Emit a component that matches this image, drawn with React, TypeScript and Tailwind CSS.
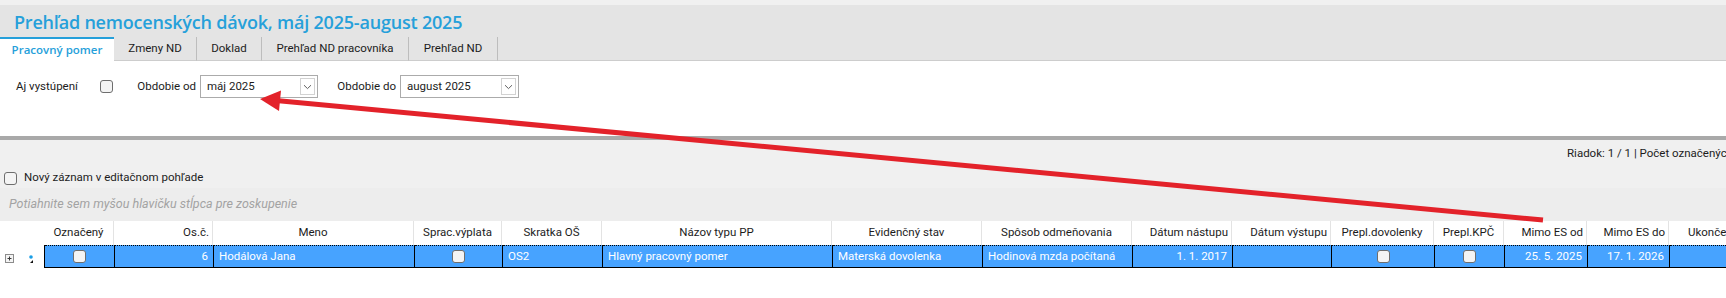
import React from "react";

type Col = {
  w: string;
  title: string;
  head: string;
  cell: string;
  value?: string;
  check?: boolean;
};

const cols: Col[] = [
  { w: "w-[70px]", title: "Označený", head: "justify-center", cell: "justify-center", check: true },
  { w: "w-[99px]", title: "Os.č.", head: "justify-end", cell: "justify-end", value: "6" },
  { w: "w-[201px]", title: "Meno", head: "justify-center", cell: "justify-start", value: "Hodálová Jana" },
  { w: "w-[88px]", title: "Sprac.výplata", head: "justify-center", cell: "justify-center", check: true },
  { w: "w-[100px]", title: "Skratka OŠ", head: "justify-center", cell: "justify-start", value: "OS2" },
  { w: "w-[230px]", title: "Názov typu PP", head: "justify-center", cell: "justify-start", value: "Hlavný pracovný pomer" },
  { w: "w-[150px]", title: "Evidenčný stav", head: "justify-center", cell: "justify-start", value: "Materská dovolenka" },
  { w: "w-[150px]", title: "Spôsob odmeňovania", head: "justify-center", cell: "justify-start", value: "Hodinová mzda počítaná" },
  { w: "w-[100px]", title: "Dátum nástupu", head: "justify-end", cell: "justify-end", value: "1. 1. 2017" },
  { w: "w-[99px]", title: "Dátum výstupu", head: "justify-end", cell: "justify-end", value: "" },
  { w: "w-[103px]", title: "Prepl.dovolenky", head: "justify-center", cell: "justify-center", check: true },
  { w: "w-[70px]", title: "Prepl.KPČ", head: "justify-center", cell: "justify-center", check: true },
  { w: "w-[83px]", title: "Mimo ES od", head: "justify-end", cell: "justify-end", value: "25. 5. 2025" },
  { w: "w-[82px]", title: "Mimo ES do", head: "justify-end", cell: "justify-end", value: "17. 1. 2026" },
  { w: "w-[130px]", title: "Ukončenie PP", head: "justify-start pl-[19px]", cell: "justify-start", value: "" },
];

const tabs = [
  { label: "Zmeny ND", w: "w-[83px]" },
  { label: "Doklad", w: "w-[65px]" },
  { label: "Prehľad ND pracovníka", w: "w-[147px]" },
  { label: "Prehľad ND", w: "w-[89px]" },
];

const Check = () => (
  <span className="block shrink-0 w-[13px] h-[13px] rounded-[3px] border border-[#6e6e6e] bg-[#f4f4f4]" />
);

const Combo = ({ value, w }: { value: string; w: string }) => (
  <div className={`${w} shrink-0 h-[23px] flex items-center border border-[#ababab] bg-white`}>
    <span className="flex-1 pl-[6px] whitespace-nowrap">{value}</span>
    <span className="w-[15px] h-[17px] mr-[2px] flex items-center justify-center border border-[#d2d2d2] bg-white">
      <svg width="9" height="6" viewBox="0 0 9 6">
        <path d="M1 1.2 L4.5 4.6 L8 1.2" fill="none" stroke="#606060" strokeWidth="1" />
      </svg>
    </span>
  </div>
);

export default function App() {
  return (
    <div className="relative w-full h-[298px] overflow-hidden bg-white text-[11.5px] text-[#1c1c1c] font-[Roboto,sans-serif]">
      {/* header */}
      <div className="bg-[#e4e4e4] border-t-[5px] border-[#f0f0f0]">
        <h1 className="h-[32px] pl-[14px] pt-[3px] leading-[28px] text-[18px] tracking-[-0.2px] font-semibold text-[#26a0da] whitespace-nowrap font-['Open_Sans',sans-serif]">
          Prehľad nemocenských dávok, máj 2025-august 2025
        </h1>
        <div className="flex h-[24px]">
          <div className="w-[114px] flex items-center justify-center bg-white border-t-2 border-[#26a0da] font-semibold text-[#26a0da] font-['Open_Sans',sans-serif] text-[11.5px]">
            Pracovný pomer
          </div>
          {tabs.map((t) => (
            <div
              key={t.label}
              className={`${t.w} flex items-center justify-center whitespace-nowrap border-r border-[#bdbdbd] border-b border-b-[#cdcdcd]`}
            >
              {t.label}
            </div>
          ))}
          <div className="flex-1 border-b border-[#cdcdcd]" />
        </div>
      </div>

      {/* filters */}
      <div className="h-[75px] pt-[14px]">
        <div className="flex items-center h-[23px] whitespace-nowrap">
          <span className="ml-[16px] w-[84px] shrink-0">Aj vystúpení</span>
          <Check />
          <span className="ml-[27px] w-[60px] shrink-0 flex justify-end pr-[4px]">
            <span>Obdobie od</span>
          </span>
          <Combo value="máj 2025" w="w-[118px]" />
          <span className="ml-[23px] w-[59px] shrink-0 flex justify-end pr-[4px]">
            <span>Obdobie do</span>
          </span>
          <Combo value="august 2025" w="w-[119px]" />
        </div>
      </div>

      <div className="h-[4px] bg-[#a9a9a9]" />

      {/* grid toolbar */}
      <div className="bg-[#f0f0f0]">
        <div className="h-[28px] flex items-center">
          <span className="ml-[1567px] shrink-0 whitespace-nowrap">Riadok: 1 / 1 | Počet označených: 0</span>
        </div>
        <div className="h-[20px] flex items-center gap-[7px] pl-[4px]">
          <Check />
          <span>Nový záznam v editačnom pohľade</span>
        </div>
        <div className="h-[33px] flex items-center pl-[9px] bg-[#ededed] italic text-[#a3a3a3] text-[12.5px]">
          Potiahnite sem myšou hlavičku stĺpca pre zoskupenie
        </div>
      </div>

      {/* grid header */}
      <div className="flex h-[24px] bg-white">
        <div className="w-[44px] shrink-0" />
        {cols.map((c) => (
          <div
            key={c.title}
            className={`${c.w} ${c.head} shrink-0 flex items-center px-[3px] border-r border-[#e3e3e3] whitespace-nowrap overflow-hidden`}
          >
            {c.title}
          </div>
        ))}
      </div>

      {/* data row */}
      <div className="flex h-[23px]">
        <div className="w-[44px] shrink-0 flex items-center">
          <svg width="44" height="23" viewBox="0 0 44 23">
            <rect x="5.5" y="9.5" width="8" height="8" fill="#f4f4f4" stroke="#8c8c8c" />
            <path d="M7.5 13.5 H11.5 M9.5 11.5 V15.5" stroke="#3a3a3a" />
            <circle cx="31" cy="12" r="1.8" fill="#1a9ee6" />
            <path d="M30 18 L33 15 L33 18 Z" fill="#111" />
          </svg>
        </div>
        <div className="flex border-l border-black">
          {cols.map((c) => (
            <div
              key={c.title}
              className={`${c.w} ${c.cell} shrink-0 flex items-center px-[5px] bg-[#47a3ff] text-white border-r border-black border-t border-t-black border-dotted border-b border-b-black whitespace-nowrap overflow-hidden`}
              style={{ borderRightStyle: "solid", borderBottomStyle: "solid" }}
            >
              {c.check ? <Check /> : c.value}
            </div>
          ))}
        </div>
      </div>

      {/* annotation arrow */}
      <svg className="absolute inset-0 pointer-events-none" width="1726" height="298" viewBox="0 0 1726 298">
        <line x1="1543" y1="220" x2="276" y2="100.5" stroke="#e3222a" strokeWidth="5" />
        <polygon points="260,99 281,90.5 279,111" fill="#e3222a" />
      </svg>
    </div>
  );
}
